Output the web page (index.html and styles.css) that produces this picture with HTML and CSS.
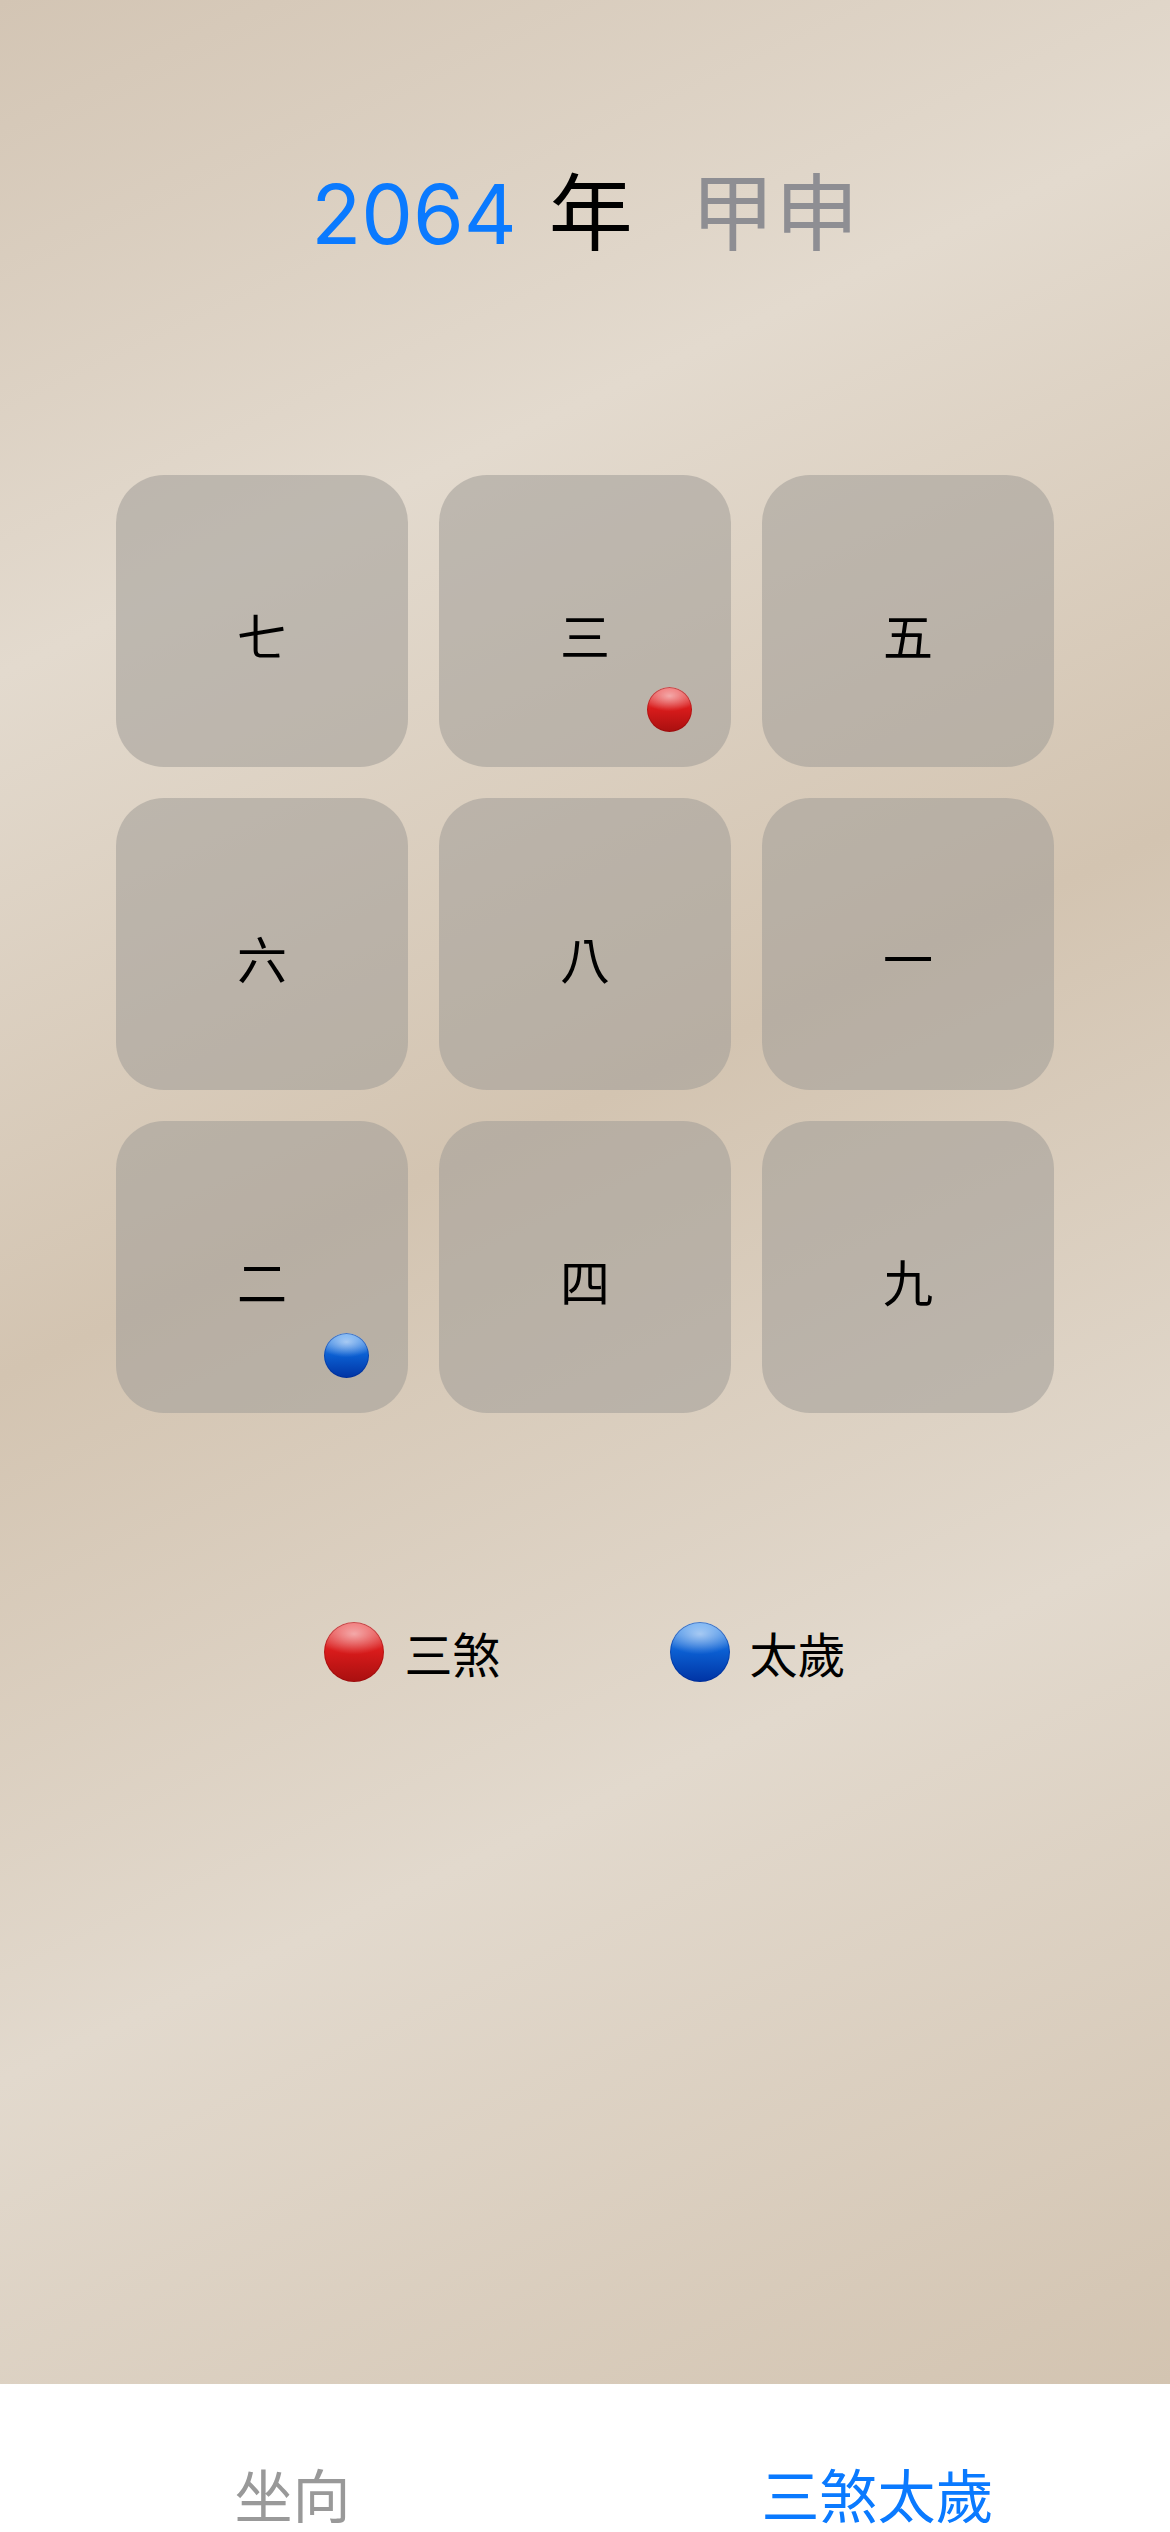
FILE: index.html
```html
<!DOCTYPE html>
<html lang="zh-Hant">
<head>
    <meta charset="UTF-8">
    <meta name="viewport" content="width=device-width, initial-scale=1.0">
    <title>三煞太歲</title>
    <link rel="stylesheet" href="styles.css">
</head>
<body>

    <main class="screen">
        <h1 class="year-line">
            <span class="year-num">2064</span>
            <span class="year-word">年</span>
            <span class="year-stem">甲申</span>
        </h1>

        <div class="grid">
            <div class="tile"><span>七</span></div>
            <div class="tile"><span>三</span><i class="dot red"></i></div>
            <div class="tile"><span>五</span></div>
            <div class="tile"><span>六</span></div>
            <div class="tile"><span>八</span></div>
            <div class="tile"><span>一</span></div>
            <div class="tile"><span>二</span><i class="dot blue"></i></div>
            <div class="tile"><span>四</span></div>
            <div class="tile"><span>九</span></div>
        </div>

        <div class="legend">
            <div class="legend-item"><i class="dot big red"></i><span>三煞</span></div>
            <div class="legend-item"><i class="dot big blue"></i><span>太歲</span></div>
        </div>
    </main>

    <nav class="tabbar">
        <div class="tab">坐向</div>
        <div class="tab active">三煞太歲</div>
    </nav>

</body>
</html>
```

FILE: styles.css
```css
html, body {
    margin: 0;
    padding: 0;
}
body {
    width: 1170px;
    height: 2532px;
    overflow: hidden;
    font-family: "Inter", "Noto Sans CJK TC", sans-serif;
    color: #000;
    background: #fff;
}
.screen {
    height: 2384px;
    display: flex;
    flex-direction: column;
    align-items: center;
    background: linear-gradient(155deg, #d3c5b4 0%, #e3dace 23%, #d3c4b1 47%, #e2d9cd 71%, #d3c4b1 100%);
}
.year-line {
    margin: 158px 0 0;
    display: flex;
    align-items: baseline;
    font-size: 86px;
    font-weight: 400;
    line-height: 100px;
}
.year-num {
    color: #0a7aff;
    font-family: "Inter", sans-serif;
    font-size: 82px;
}
.year-word {
    font-family: "Noto Sans CJK TC", sans-serif;
    margin-left: 32px;
    font-size: 84px;
}
.year-stem {
    font-family: "Noto Sans CJK TC", sans-serif;
    color: #8e8e93;
    margin-left: 58px;
    font-size: 84px;
}
.grid {
    margin-top: 210px;
    display: grid;
    grid-template-columns: repeat(3, 292px);
    grid-auto-rows: 292px;
    gap: 31px;
}
.tile {
    position: relative;
    border-radius: 48px;
    background: rgba(160, 156, 152, 0.55);
    display: flex;
    align-items: center;
    justify-content: center;
    padding-top: 26px;
    box-sizing: border-box;
    font-family: "Noto Sans CJK TC", sans-serif;
    font-size: 50px;
    line-height: 1;
}
.dot {
    display: block;
    width: 45px;
    height: 45px;
    border-radius: 50%;
}
.tile .dot {
    position: absolute;
    right: 39px;
    bottom: 35px;
}
.dot.red {
    background:
        radial-gradient(ellipse 62% 34% at 50% 20%, rgba(255, 255, 255, 0.55), rgba(255, 255, 255, 0) 100%),
        linear-gradient(#ef5a5a, #d81b1b 48%, #a80f0f);
    box-shadow: inset 0 0 0 1px rgba(140, 10, 10, 0.45);
}
.dot.blue {
    background:
        radial-gradient(ellipse 62% 34% at 50% 20%, rgba(255, 255, 255, 0.55), rgba(255, 255, 255, 0) 100%),
        linear-gradient(#5ea6f2, #0b5fd2 48%, #0033a3);
    box-shadow: inset 0 0 0 1px rgba(0, 40, 140, 0.45);
}
.legend {
    margin-top: 209px;
    display: flex;
    gap: 169px;
}
.legend-item {
    display: flex;
    align-items: center;
    gap: 20px;
    font-family: "Noto Sans CJK TC", sans-serif;
    font-size: 48px;
    line-height: 60px;
}
.dot.big {
    width: 60px;
    height: 60px;
}
.tabbar {
    height: 148px;
    display: flex;
    background: #fff;
}
.tab {
    flex: 1;
    text-align: center;
    padding-top: 80px;
    font-family: "Noto Sans CJK TC", sans-serif;
    font-size: 58px;
    line-height: 58px;
    color: #999;
}
.tab.active {
    color: #0a7aff;
}
```
